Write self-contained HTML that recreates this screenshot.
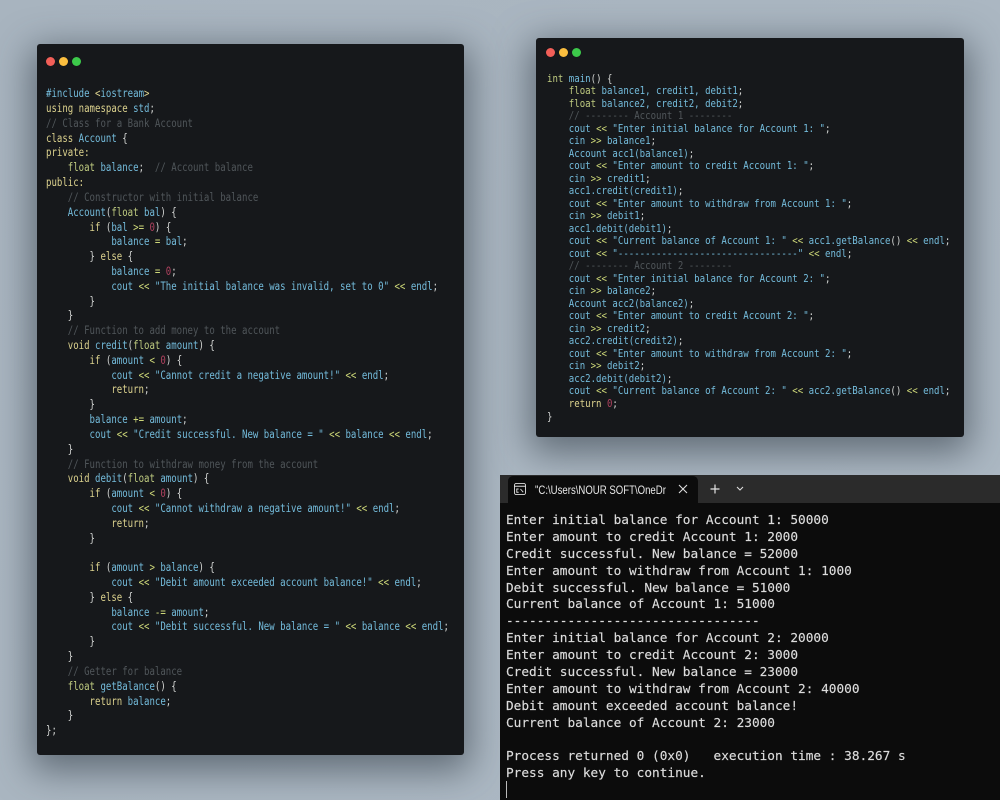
<!DOCTYPE html>
<html><head><meta charset="utf-8"><style>
html,body{margin:0;padding:0;width:1000px;height:800px;overflow:hidden}
body{position:relative;background:#a9b5c0}
.bg{position:absolute;inset:0;background:linear-gradient(135deg,#a8b4bf,#adb9c4)}
.p{position:absolute;background:#16181b;border-radius:3px;box-shadow:0 10px 36px 6px rgba(45,55,65,.58)}
.d{position:absolute;width:9px;height:9px;border-radius:50%}
pre{position:absolute;margin:0;font-family:"DejaVu Sans Mono","Liberation Mono",monospace;font-size:11.6px;transform:scaleX(.78);transform-origin:0 0;color:#d4d6d4;filter:blur(.3px)}
#l{left:46px;top:86.2px;line-height:14.81px}
#r{left:547px;top:72.6px;line-height:12.52px;font-size:11px;transform:scaleX(.823)}
.k{color:#dcd28e}.f{color:#bfcb80}.b{color:#74bcdc}.c{color:#50565a}.n{color:#b0425f}.o{color:#cdd778}
#t{position:absolute;left:500px;top:475px;width:500px;height:325px;background:#0c0c0c;overflow:hidden}
#bar{position:absolute;left:0;top:0;width:500px;height:28px;background:#2b2b2b}
#tab{position:absolute;left:8px;top:1px;width:190px;height:28px;background:#0c0c0c;border-radius:5px 5px 0 0}
#title{position:absolute;left:27px;top:6px;font:12px/16px "Liberation Sans",sans-serif;color:#e8e8e8;white-space:pre;transform:scaleX(.8);transform-origin:0 0}
#out{position:absolute;left:6px;top:38px;margin:0;transform:none;font:12.77px/16.87px "DejaVu Sans Mono","Liberation Mono",monospace;color:#dcdcdc;filter:blur(.25px);-webkit-text-stroke:.15px #dcdcdc}
</style></head><body>
<div class="bg"></div>

<div class="p" style="left:37px;top:44px;width:427px;height:711px">
<div class="d" style="left:8.5px;top:13px;background:#f25f58"></div>
<div class="d" style="left:21.5px;top:13px;background:#fbbe3f"></div>
<div class="d" style="left:34.5px;top:13px;background:#3cc94a"></div>
</div>
<pre id="l"><span class="b">#include</span> <span class="k">&lt;</span><span class="b">iostream</span><span class="k">&gt;</span>
<span class="k">using namespace</span> <span class="b">std</span>;
<span class="c">// Class for a Bank Account</span>
<span class="k">class</span> <span class="b">Account</span> {
<span class="k">private:</span>
    <span class="f">float</span> <span class="b">balance</span>;  <span class="c">// Account balance</span>
<span class="k">public:</span>
    <span class="c">// Constructor with initial balance</span>
    <span class="b">Account</span>(<span class="f">float</span> <span class="b">bal</span>) {
        <span class="k">if</span> (<span class="b">bal</span> <span class="o">&gt;=</span> <span class="n">0</span>) {
            <span class="b">balance</span> <span class="o">=</span> <span class="b">bal</span>;
        } <span class="k">else</span> {
            <span class="b">balance</span> <span class="o">=</span> <span class="n">0</span>;
            <span class="b">cout</span> <span class="o">&lt;&lt;</span> <span class="b">"The initial balance was invalid, set to 0"</span> <span class="o">&lt;&lt;</span> <span class="b">endl</span>;
        }
    }
    <span class="c">// Function to add money to the account</span>
    <span class="k">void</span> <span class="b">credit</span>(<span class="f">float</span> <span class="b">amount</span>) {
        <span class="k">if</span> (<span class="b">amount</span> <span class="o">&lt;</span> <span class="n">0</span>) {
            <span class="b">cout</span> <span class="o">&lt;&lt;</span> <span class="b">"Cannot credit a negative amount!"</span> <span class="o">&lt;&lt;</span> <span class="b">endl</span>;
            <span class="k">return</span>;
        }
        <span class="b">balance</span> <span class="o">+=</span> <span class="b">amount</span>;
        <span class="b">cout</span> <span class="o">&lt;&lt;</span> <span class="b">"Credit successful. New balance = "</span> <span class="o">&lt;&lt;</span> <span class="b">balance</span> <span class="o">&lt;&lt;</span> <span class="b">endl</span>;
    }
    <span class="c">// Function to withdraw money from the account</span>
    <span class="k">void</span> <span class="b">debit</span>(<span class="f">float</span> <span class="b">amount</span>) {
        <span class="k">if</span> (<span class="b">amount</span> <span class="o">&lt;</span> <span class="n">0</span>) {
            <span class="b">cout</span> <span class="o">&lt;&lt;</span> <span class="b">"Cannot withdraw a negative amount!"</span> <span class="o">&lt;&lt;</span> <span class="b">endl</span>;
            <span class="k">return</span>;
        }

        <span class="k">if</span> (<span class="b">amount</span> <span class="o">&gt;</span> <span class="b">balance</span>) {
            <span class="b">cout</span> <span class="o">&lt;&lt;</span> <span class="b">"Debit amount exceeded account balance!"</span> <span class="o">&lt;&lt;</span> <span class="b">endl</span>;
        } <span class="k">else</span> {
            <span class="b">balance</span> <span class="o">-=</span> <span class="b">amount</span>;
            <span class="b">cout</span> <span class="o">&lt;&lt;</span> <span class="b">"Debit successful. New balance = "</span> <span class="o">&lt;&lt;</span> <span class="b">balance</span> <span class="o">&lt;&lt;</span> <span class="b">endl</span>;
        }
    }
    <span class="c">// Getter for balance</span>
    <span class="f">float</span> <span class="b">getBalance</span>() {
        <span class="k">return</span> <span class="b">balance</span>;
    }
};</pre>

<div class="p" style="left:536px;top:38px;width:428px;height:399px">
<div class="d" style="left:9.5px;top:10px;background:#f25f58"></div>
<div class="d" style="left:22.5px;top:10px;background:#fbbe3f"></div>
<div class="d" style="left:35.5px;top:10px;background:#3cc94a"></div>
</div>
<pre id="r"><span class="f">int</span> <span class="b">main</span>() {
    <span class="f">float</span> <span class="b">balance1, credit1, debit1</span>;
    <span class="f">float</span> <span class="b">balance2, credit2, debit2</span>;
    <span class="c">// -------- Account 1 --------</span>
    <span class="b">cout</span> <span class="o">&lt;&lt;</span> <span class="b">"Enter initial balance for Account 1: "</span>;
    <span class="b">cin</span> <span class="o">&gt;&gt;</span> <span class="b">balance1</span>;
    <span class="b">Account acc1(balance1)</span>;
    <span class="b">cout</span> <span class="o">&lt;&lt;</span> <span class="b">"Enter amount to credit Account 1: "</span>;
    <span class="b">cin</span> <span class="o">&gt;&gt;</span> <span class="b">credit1</span>;
    <span class="b">acc1.credit(credit1)</span>;
    <span class="b">cout</span> <span class="o">&lt;&lt;</span> <span class="b">"Enter amount to withdraw from Account 1: "</span>;
    <span class="b">cin</span> <span class="o">&gt;&gt;</span> <span class="b">debit1</span>;
    <span class="b">acc1.debit(debit1)</span>;
    <span class="b">cout</span> <span class="o">&lt;&lt;</span> <span class="b">"Current balance of Account 1: "</span> <span class="o">&lt;&lt;</span> <span class="b">acc1.getBalance</span>() <span class="o">&lt;&lt;</span> <span class="b">endl</span>;
    <span class="b">cout</span> <span class="o">&lt;&lt;</span> <span class="b">"---------------------------------"</span> <span class="o">&lt;&lt;</span> <span class="b">endl</span>;
    <span class="c">// -------- Account 2 --------</span>
    <span class="b">cout</span> <span class="o">&lt;&lt;</span> <span class="b">"Enter initial balance for Account 2: "</span>;
    <span class="b">cin</span> <span class="o">&gt;&gt;</span> <span class="b">balance2</span>;
    <span class="b">Account acc2(balance2)</span>;
    <span class="b">cout</span> <span class="o">&lt;&lt;</span> <span class="b">"Enter amount to credit Account 2: "</span>;
    <span class="b">cin</span> <span class="o">&gt;&gt;</span> <span class="b">credit2</span>;
    <span class="b">acc2.credit(credit2)</span>;
    <span class="b">cout</span> <span class="o">&lt;&lt;</span> <span class="b">"Enter amount to withdraw from Account 2: "</span>;
    <span class="b">cin</span> <span class="o">&gt;&gt;</span> <span class="b">debit2</span>;
    <span class="b">acc2.debit(debit2)</span>;
    <span class="b">cout</span> <span class="o">&lt;&lt;</span> <span class="b">"Current balance of Account 2: "</span> <span class="o">&lt;&lt;</span> <span class="b">acc2.getBalance</span>() <span class="o">&lt;&lt;</span> <span class="b">endl</span>;
    <span class="k">return</span> <span class="n">0</span>;
}</pre>

<div id="t">
<div id="bar"></div>
<div id="tab">
<svg style="position:absolute;left:6px;top:7px" width="12" height="12" viewBox="0 0 13 13" fill="none" stroke="#ddd" stroke-width="1"><rect x=".5" y=".5" width="12" height="12" rx="2"/><path d="M.5 3.5h12M5 6.5H3v3.5h2M7 6.5l3 3.5"/></svg>
<div id="title">"C:\Users\NOUR SOFT\OneDr</div>
<svg style="position:absolute;left:170px;top:8px" width="10" height="10" viewBox="0 0 10 10" fill="none" stroke="#ddd" stroke-width="1.1"><path d="M1 1l8 8M9 1l-8 8"/></svg>
</div>
<svg style="position:absolute;left:210px;top:9px" width="10" height="10" viewBox="0 0 10 10" fill="none" stroke="#e4e4e4" stroke-width="1.2"><path d="M5 .5v9M.5 5h9"/></svg>
<svg style="position:absolute;left:236px;top:11px" width="8" height="6" viewBox="0 0 8 6" fill="none" stroke="#ddd" stroke-width="1.1"><path d="M1 1l3 3 3-3"/></svg>
<pre id="out">Enter initial balance for Account 1: 50000
Enter amount to credit Account 1: 2000
Credit successful. New balance = 52000
Enter amount to withdraw from Account 1: 1000
Debit successful. New balance = 51000
Current balance of Account 1: 51000
---------------------------------
Enter initial balance for Account 2: 20000
Enter amount to credit Account 2: 3000
Credit successful. New balance = 23000
Enter amount to withdraw from Account 2: 40000
Debit amount exceeded account balance!
Current balance of Account 2: 23000

Process returned 0 (0x0)   execution time : 38.267 s
Press any key to continue.</pre>
<div style="position:absolute;left:6px;top:306px;width:1px;height:17px;background:#bbb"></div>
</div>
</body></html>
